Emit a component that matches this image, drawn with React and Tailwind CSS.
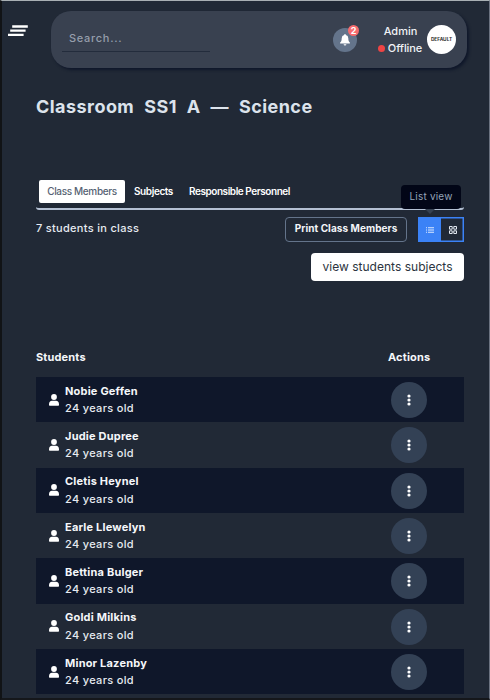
const students = [
  "Nobie Geffen",
  "Judie Dupree",
  "Cletis Heynel",
  "Earle Llewelyn",
  "Bettina Bulger",
  "Goldi Milkins",
  "Minor Lazenby",
];

function MenuIcon() {
  return (
    <svg className="h-3 w-5" viewBox="0 0 20 12" fill="none" stroke="#fff" strokeWidth="2.3">
      <path d="M4.200 1.500H19.800M2.200 5.700H17.600M0 9.800H15.600" />
    </svg>
  );
}

function BellIcon() {
  return (
    <svg className="h-[12px] w-[10px]" viewBox="0 0 10 12" fill="#fff">
      <path d="M5 0a.8.8 0 0 1 .8.8v.3A3.3 3.3 0 0 1 8.3 4.3c0 2.500.5 3.300 1.500 4.300.4.500.1 1-.5 1H.7c-.6 0-.9-.5-.5-1 1-1 1.500-1.800 1.500-4.300A3.300 3.300 0 0 1 4.200 1.100V.8A.8.800 0 0 1 5 0ZM3.600 10.200h2.800a1.400 1.400 0 0 1-2.800 0Z" />
    </svg>
  );
}

function UserIcon() {
  return (
    <svg className="h-3 w-[10px]" viewBox="0 0 10 12" fill="#fff">
      <circle cx="5" cy="3" r="2.900" />
      <path d="M0 10.200C0 8 1.200 6.800 3 6.800h4c1.800 0 3 1.200 3 3.400v.6c0 .6-.4 1-1 1H1c-.6 0-1-.4-1-1Z" />
    </svg>
  );
}

function Header() {
  return (
    <header className="flex h-[69px] pt-[11px] pl-2">
      <div className="w-[43px] pt-[14px]">
        <MenuIcon />
      </div>
      <div className="flex h-[57px] w-[416px] rounded-[20px] bg-[#394150] shadow-[2px_2px_3px_#0f172a]">
        <div className="ml-[11px] mt-[17px] h-[24px] w-[148px] border-b border-[#232c3c] pl-[7px] text-[11px] font-medium leading-[21px] tracking-[0.7px] text-[#969eac]">
          Search...
        </div>
        <div className="relative ml-[123px] mt-[17px] flex h-6 w-6 items-center justify-center rounded-full bg-[#64748b]">
          <BellIcon />
          <span className="absolute -top-[3px] left-[15px] flex h-[11px] w-[11px] items-center justify-center rounded-full bg-[#f66b6e] text-[9px] font-bold text-white">
            2
          </span>
        </div>
        <div className="ml-[20px] mt-[12px] flex w-[46px] flex-col items-center text-[11px] font-medium leading-[17px] text-[#f0f2f6]">
          <span className="ml-[1px] whitespace-nowrap">Admin</span>
          <span className="flex items-center gap-[3px] whitespace-nowrap tracking-[-0.1px]">
            <i className="h-[7px] w-[7px] shrink-0 rounded-full bg-[#ef4444]" />
            Offline
          </span>
        </div>
        <div className="ml-[4px] mt-[14px] flex h-[29px] w-[29px] items-center justify-center rounded-full bg-white text-[4.8px] font-bold text-[#333]">
          DEFAULT
        </div>
      </div>
    </header>
  );
}

function Tabs() {
  return (
    <nav className="mt-[60px] flex h-[32px] rounded-[3px] border-b-2 border-[#b4c0d3] pl-[3px] pt-[2px] text-[10px] leading-[22px] text-white">
      <div className="h-[23px] w-[86px] rounded-[2px] bg-white text-center font-medium text-[#566273]">
        <span className="tracking-[-0.35px]">Class Members</span>
      </div>
      <span className="ml-[9px] w-[55px] whitespace-nowrap font-semibold tracking-[-0.4px]">Subjects</span>
      <span className="whitespace-nowrap font-semibold tracking-[-0.44px]">Responsible Personnel</span>
    </nav>
  );
}

function Toolbar() {
  return (
    <div className="mt-[7px] flex h-[26px]">
      <p className="w-[249px] text-[11px] font-medium leading-[22px] tracking-[0.3px] text-[#e7ebf1]">7 students in class</p>
      <button className="flex h-[25px] w-[122px] items-center justify-center whitespace-nowrap rounded-[4px] border border-[#64748b] pb-[2px] text-[10px] font-bold tracking-[0.07px] text-[#f3f5f9]">
        Print Class Members
      </button>
      <div className="relative ml-[11px] flex h-[25px] w-[46px] shadow-[inset_0_0_0_1.5px_#3b82f6]">
        <div className="flex w-[23px] items-center justify-center bg-[#3b82f6] pl-px">
          <svg className="h-[6px] w-2" viewBox="0 0 8 6" stroke="#dce9ff" strokeWidth="1.1">
            <path d="M0 .7h1M2 .7h6M0 3h1M2 3h6M0 5.300h1M2 5.300h6" />
          </svg>
        </div>
        <div className="flex flex-1 items-center justify-center">
          <svg className="h-2 w-2" viewBox="0 0 8 8" fill="none" stroke="#e2e8f0" strokeWidth="1">
            <path d="M.5.500h2.700v2.700H.5ZM4.800.500h2.700v2.700H4.800ZM.5 4.800h2.700v2.700H.5ZM4.800 4.800h2.700v2.700H4.800Z" />
          </svg>
        </div>
        <div className="absolute -top-[32px] -left-[17px] flex h-[24px] w-[60px] items-center justify-center whitespace-nowrap rounded-[4px] bg-[#020617] pb-px text-[10px] tracking-[0.2px] text-[#94a3b8]">
          List view
        </div>
        <i className="absolute -top-[8px] left-[7px] h-0 w-0 border-x-[5px] border-t-[5px] border-x-transparent border-t-[#364151]" />
      </div>
    </div>
  );
}

function StudentRow({ name, dark }) {
  return (
    <li className={dark ? "flex h-[45.35px] bg-[#0f172a]" : "flex h-[45.35px]"}>
      <div className="flex w-[29px] items-center pl-[12.5px]">
        <UserIcon />
      </div>
      <div className="w-[326px] pt-[5.6px] text-[11px] leading-[17.3px] text-[#e7ebf1]">
        <p className="font-bold tracking-[0.2px] text-[#f5f7fa]">{name}</p>
        <p className="font-medium tracking-[0.33px]">24 years old</p>
      </div>
      <div className="mt-[5px] flex h-[36px] w-[36px] items-center justify-center rounded-full bg-[#334155]">
        <svg className="h-3 w-1" viewBox="0 0 4 12" fill="#fff">
          <circle cx="2" cy="2" r="1.600" />
          <circle cx="2" cy="6" r="1.600" />
          <circle cx="2" cy="10" r="1.600" />
        </svg>
      </div>
    </li>
  );
}

export default function App() {
  return (
    <div className="h-[700px] w-[490px] overflow-hidden border-b-2 border-l-2 border-r border-t border-b-[#15171b] border-l-[#111316] border-r-[#6b7280] border-t-[#a9b0b4] bg-[#212936] font-['HK_Grotesk','Inter',sans-serif]">
      <div className="-ml-[2px] -mt-px w-[490px]">
        <Header />
        <main className="ml-[36px] w-[428px]">
          <h1 className="mt-[25px] h-6 whitespace-nowrap text-[18px] font-bold leading-[25px] tracking-[0.45px] text-[#dce3ec] [word-spacing:5.2px]">
            Classroom SS1 A — Science
          </h1>
          <Tabs />
          <Toolbar />
          <button className="ml-auto mt-[10px] block h-[28px] w-[153px] whitespace-nowrap rounded-[4px] bg-white text-[12px] tracking-[0.02px] text-[#2c3440]">
            view students subjects
          </button>
          <div className="mt-[67px] flex h-[29px] text-[11px] font-bold leading-[18px] tracking-[0.15px] text-[#f5f7fa]">
            <span className="w-[352px]">Students</span>
            <span>Actions</span>
          </div>
          <ul>
            {students.map((name, i) => (
              <StudentRow key={name} name={name} dark={i % 2 === 0} />
            ))}
          </ul>
        </main>
      </div>
    </div>
  );
}
